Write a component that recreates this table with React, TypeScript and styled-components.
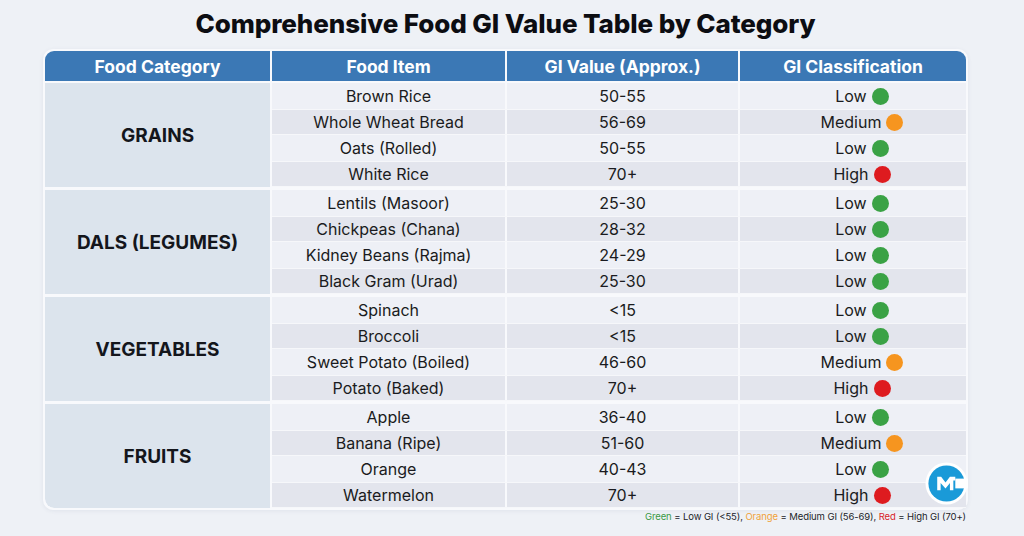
import React from "react";
import styled, { createGlobalStyle } from "styled-components";

const Global = createGlobalStyle`
  html, body { margin: 0; padding: 0; }
  body { background: #eef1f6; font-family: "Inter", "Noto Sans", sans-serif; }
`;

const Page = styled.div`
  width: 1024px;
  height: 536px;
  display: flex;
  flex-direction: column;
  align-items: flex-start;
  box-sizing: border-box;
  padding: 7px 0 0 43px;
  background: #eef1f6;
`;

const Title = styled.h1`
  width: 925px;
  margin: 0 0 8px 0;
  text-align: center;
  font-family: "Inter", sans-serif;
  font-weight: 800;
  font-size: 26px;
  line-height: 34px;
  color: #0c0d12;
  letter-spacing: -0.1px;
`;

const TableWrap = styled.div`
  position: relative;
  width: 921px;
  border: 2px solid #f8f9fc;
  border-radius: 10px;
  background: #f8f9fc;
  display: flex;
  flex-direction: column;
  gap: 3px;
  box-shadow: 0 1px 4px rgba(60, 80, 110, 0.08);
`;

const COLS = "225px 233px 231px 1fr";

const HeaderRow = styled.div`
  display: grid;
  grid-template-columns: ${COLS};
  gap: 2px;
  height: 30px;
  margin-bottom: -1px;
`;

const HeadCell = styled.div<{ $first?: boolean; $last?: boolean }>`
  background: #3b78b5;
  color: #ffffff;
  font-weight: 700;
  font-size: 17.5px;
  display: flex;
  align-items: center;
  justify-content: center;
  border-top-left-radius: ${(p) => (p.$first ? "9px" : "0")};
  border-top-right-radius: ${(p) => (p.$last ? "9px" : "0")};
`;

const Group = styled.div<{ $last?: boolean }>`
  display: grid;
  grid-template-columns: 225px 1fr;
  gap: 2px;
  border-bottom-left-radius: ${(p) => (p.$last ? "9px" : "0")};
  overflow: hidden;
`;

const CategoryCell = styled.div<{ $last?: boolean }>`
  background: #dce4ed;
  display: flex;
  align-items: center;
  justify-content: center;
  font-weight: 700;
  font-size: 19px;
  color: #14161c;
  border-bottom-left-radius: ${(p) => (p.$last ? "9px" : "0")};
`;

const Rows = styled.div`
  display: flex;
  flex-direction: column;
`;

const Row = styled.div<{ $alt: boolean }>`
  display: grid;
  grid-template-columns: 233px 231px 1fr;
  column-gap: 2px;
  height: 26px;
  border-top: ${(p) => (p.$alt ? "1px solid #f6f7fa" : "none")};
  border-bottom: ${(p) => (p.$alt ? "1px solid #f6f7fa" : "none")};
  box-sizing: border-box;
`;

const Cell = styled.div<{ $alt: boolean }>`
  background: ${(p) => (p.$alt ? "#e3e5ed" : "#eef0f6")};
  display: flex;
  align-items: center;
  justify-content: center;
  font-size: 16px;
  color: #1a1b20;
`;

const ClassCell = styled(Cell)`
  gap: 5px;
  padding-left: 18px;
`;

const Dot = styled.span<{ $color: string }>`
  width: 17px;
  height: 17px;
  border-radius: 50%;
  background: ${(p) => p.$color};
  flex: none;
`;

const Legend = styled.div`
  width: 925px;
  margin-top: 1px;
  text-align: right;
  font-size: 9.5px;
  color: #22242a;
  letter-spacing: -0.1px;
  box-sizing: border-box;
  padding-right: 2px;
`;

const LegendColor = styled.span<{ $color: string }>`
  color: ${(p) => p.$color};
`;

const Logo = styled.svg`
  position: absolute;
  right: -2px;
  bottom: 3px;
  width: 43px;
  height: 43px;
`;

type Cls = "Low" | "Medium" | "High";
const DOT: Record<Cls, string> = { Low: "#3aa245", Medium: "#f6951f", High: "#de1b1f" };

const data: { cat: string; items: [string, string, Cls][] }[] = [
  {
    cat: "GRAINS",
    items: [
      ["Brown Rice", "50-55", "Low"],
      ["Whole Wheat Bread", "56-69", "Medium"],
      ["Oats (Rolled)", "50-55", "Low"],
      ["White Rice", "70+", "High"],
    ],
  },
  {
    cat: "DALS (LEGUMES)",
    items: [
      ["Lentils (Masoor)", "25-30", "Low"],
      ["Chickpeas (Chana)", "28-32", "Low"],
      ["Kidney Beans (Rajma)", "24-29", "Low"],
      ["Black Gram (Urad)", "25-30", "Low"],
    ],
  },
  {
    cat: "VEGETABLES",
    items: [
      ["Spinach", "<15", "Low"],
      ["Broccoli", "<15", "Low"],
      ["Sweet Potato (Boiled)", "46-60", "Medium"],
      ["Potato (Baked)", "70+", "High"],
    ],
  },
  {
    cat: "FRUITS",
    items: [
      ["Apple", "36-40", "Low"],
      ["Banana (Ripe)", "51-60", "Medium"],
      ["Orange", "40-43", "Low"],
      ["Watermelon", "70+", "High"],
    ],
  },
];

export default function App() {
  return (
    <>
      <Global />
      <Page>
        <Title>Comprehensive Food GI Value Table by Category</Title>
        <TableWrap>
          <HeaderRow>
            <HeadCell $first>Food Category</HeadCell>
            <HeadCell>Food Item</HeadCell>
            <HeadCell>GI Value (Approx.)</HeadCell>
            <HeadCell $last>GI Classification</HeadCell>
          </HeaderRow>
          {data.map((g, gi) => (
            <Group key={g.cat} $last={gi === data.length - 1}>
              <CategoryCell $last={gi === data.length - 1}>{g.cat}</CategoryCell>
              <Rows>
                {g.items.map(([name, val, cls], i) => {
                  const alt = i % 2 === 1;
                  return (
                    <Row key={name} $alt={alt}>
                      <Cell $alt={alt}>{name}</Cell>
                      <Cell $alt={alt}>{val}</Cell>
                      <ClassCell $alt={alt}>
                        {cls}
                        <Dot $color={DOT[cls]} />
                      </ClassCell>
                    </Row>
                  );
                })}
              </Rows>
            </Group>
          ))}
          <Logo viewBox="0 0 44 44">
            <circle cx="22" cy="22" r="21.5" fill="#ffffff" />
            <circle cx="22" cy="22" r="18.5" fill="#1a9ad8" />
            <rect x="31" y="17" width="14" height="10" fill="#ffffff" />
            <path d="M12.5 29 V15 H16.5 L21 21 L25.5 15 H31 V19 H29 V29 H25.5 V21.5 L21 27 L16 21.5 V29 Z" fill="#ffffff" />
          </Logo>
        </TableWrap>
        <Legend>
          <LegendColor $color="#3c9a47">Green</LegendColor> = Low GI (&lt;55),{" "}
          <LegendColor $color="#f0a23a">Orange</LegendColor> = Medium GI (56-69),{" "}
          <LegendColor $color="#d8232a">Red</LegendColor> = High GI (70+)
        </Legend>
      </Page>
    </>
  );
}
